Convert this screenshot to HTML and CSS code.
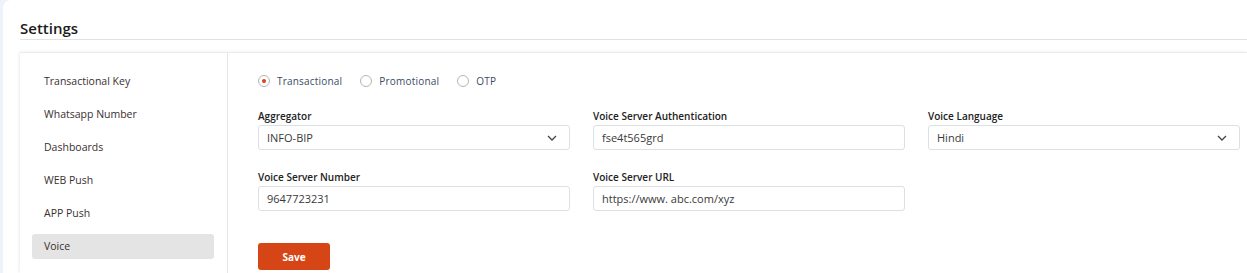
FILE: index.html
```html
<!DOCTYPE html>
<html lang="en">
<head>
    <meta charset="UTF-8">
    <meta name="viewport" content="width=device-width, initial-scale=1.0">
    <title>Settings</title>
    <link rel="stylesheet" href="styles.css">
</head>
<body>
    <div class="page">
        <h1 class="page-title">Settings</h1>

        <div class="settings-card">
            <!-- Settings menu -->
            <div class="side-menu">
                <a href="javascript:void(0)">Transactional Key</a>
                <a href="javascript:void(0)">Whatsapp Number</a>
                <a href="javascript:void(0)">Dashboards</a>
                <a href="javascript:void(0)">WEB Push</a>
                <a href="javascript:void(0)">APP Push</a>
                <a href="javascript:void(0)" class="active">Voice</a>
            </div>

            <!-- Voice settings form -->
            <div class="settings-body">
                <div class="radio-row">
                    <label class="radio"><span class="radio-dot checked"></span>Transactional</label>
                    <label class="radio"><span class="radio-dot"></span>Promotional</label>
                    <label class="radio"><span class="radio-dot"></span>OTP</label>
                </div>

                <div class="form-grid">
                    <div class="field">
                        <label>Aggregator</label>
                        <div class="input select">
                            <span>INFO-BIP</span>
                            <svg width="10" height="6" viewBox="0 0 10 6"><path d="M1 1l4 4 4-4" fill="none" stroke="#444" stroke-width="1.3"/></svg>
                        </div>
                    </div>
                    <div class="field">
                        <label>Voice Server Authentication</label>
                        <div class="input">fse4t565grd</div>
                    </div>
                    <div class="field">
                        <label>Voice Language</label>
                        <div class="input select">
                            <span>Hindi</span>
                            <svg width="10" height="6" viewBox="0 0 10 6"><path d="M1 1l4 4 4-4" fill="none" stroke="#444" stroke-width="1.3"/></svg>
                        </div>
                    </div>
                    <div class="field">
                        <label>Voice Server Number</label>
                        <div class="input">9647723231</div>
                    </div>
                    <div class="field">
                        <label>Voice Server URL</label>
                        <div class="input">https://www. abc.com/xyz</div>
                    </div>
                </div>

                <button class="save-btn">Save</button>
            </div>
        </div>
    </div>
</body>
</html>
```

FILE: styles.css
```css
/* Reset and base styles */
* {
    box-sizing: border-box;
    margin: 0;
    padding: 0;
}

body {
    font-family: 'Open Sans', 'Liberation Sans', sans-serif;
    color: #333;
    background-color: #eef3fb;
    height: 273px;
    overflow: hidden;
}

.page {
    margin-left: 3px;
    background-color: #fff;
    border-top-left-radius: 8px;
    padding: 17px 0 0 17px;
    height: 100%;
}

.page-title {
    font-size: 15px;
    font-weight: 600;
    color: #1b1b1b;
    line-height: 22px;
    border-bottom: 1px solid #e2e2e2;
}

/* Card */
.settings-card {
    display: flex;
    margin-top: 12px;
    border-top: 1px solid #ececec;
    box-shadow: -1px 0 3px rgba(0,0,0,0.08);
    height: 221px;
}

.side-menu {
    width: 208px;
    padding: 16px 13px 0 12px;
    border-right: 1px solid #e6e6e6;
    display: flex;
    flex-direction: column;
    gap: 8px;
}

.side-menu a {
    display: block;
    height: 25px;
    line-height: 25px;
    padding-left: 12px;
    font-size: 10.5px;
    color: #3a2f2f;
    text-decoration: none;
    border-radius: 3px;
}

.side-menu a.active {
    background-color: #e4e4e4;
}

.settings-body {
    flex: 1;
    padding: 20px 7px 0 30px;
}

.radio-row {
    display: flex;
    gap: 18px;
    height: 16px;
    align-items: center;
}

.radio {
    display: flex;
    align-items: center;
    gap: 7px;
    font-size: 10px;
    letter-spacing: 0.2px;
    color: #3c4a66;
}

.radio-dot {
    width: 12px;
    height: 12px;
    border: 1px solid #b5b5b5;
    border-radius: 50%;
    position: relative;
}

.radio-dot.checked::after {
    content: "";
    position: absolute;
    left: 3px;
    top: 3px;
    width: 4px;
    height: 4px;
    border-radius: 50%;
    background-color: #d9441a;
}

.form-grid {
    display: grid;
    grid-template-columns: repeat(3, 1fr);
    column-gap: 23px;
    row-gap: 21px;
    margin-top: 21px;
}

.field label {
    display: block;
    font-size: 10px;
    font-weight: 600;
    color: #222;
    line-height: 13px;
    margin-bottom: 2px;
}

.input {
    height: 25px;
    border: 1px solid #dcdfe4;
    border-radius: 3px;
    padding: 0 8px;
    font-size: 11px;
    line-height: 23px;
    color: #3a3a3a;
}

.input.select {
    display: flex;
    justify-content: space-between;
    align-items: center;
    padding-right: 12px;
}

.save-btn {
    margin-top: 32px;
    width: 72px;
    height: 27px;
    background-color: #d64516;
    color: #fff;
    border: none;
    border-radius: 3px;
    font-family: inherit;
    font-size: 10px;
    font-weight: 700;
    cursor: pointer;
}
```
